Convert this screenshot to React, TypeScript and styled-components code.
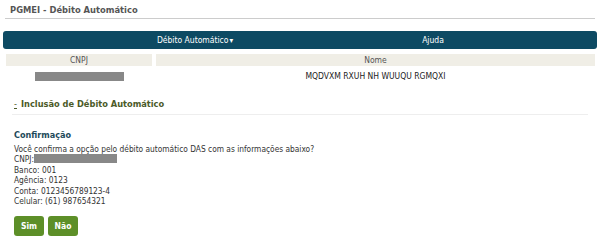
import React from "react";
import styled, { createGlobalStyle } from "styled-components";

const GlobalStyle = createGlobalStyle`
  body {
    margin: 0;
    background: #ffffff;
    font-family: "DejaVu Sans Condensed", "DejaVu Sans", Verdana, sans-serif;
    font-stretch: semi-condensed;
    font-size: 8.5px;
    color: #333;
  }
`;

export default function App(): JSX.Element {
  return (
    <>
      <GlobalStyle />
      <Page>
        <PageTitle>PGMEI - Débito Automático</PageTitle>
        <NavBar>
          <NavItem>
            Débito Automático<Caret>▾</Caret>
          </NavItem>
          <NavItem>Ajuda</NavItem>
        </NavBar>
        <InfoTable>
          <HeadCell>CNPJ</HeadCell>
          <HeadCell>Nome</HeadCell>
          <BodyCell>
            <Redacted $width={89} />
          </BodyCell>
          <BodyCell>MQDVXM RXUH NH WUUQU RGMQXI</BodyCell>
        </InfoTable>
        <SectionTitle>
          <Toggle>-</Toggle>
          Inclusão de Débito Automático
        </SectionTitle>
        <Content>
          <SubTitle>Confirmação</SubTitle>
          <Line>
            Você confirma a opção pelo débito automático DAS com as informações
            abaixo?
          </Line>
          <Line>
            CNPJ:
            <Redacted $width={83} />
          </Line>
          <Line>Banco: 001</Line>
          <Line>Agência: 0123</Line>
          <Line>Conta: 0123456789123-4</Line>
          <Line>Celular: (61) 987654321</Line>
          <Actions>
            <ActionButton>Sim</ActionButton>
            <ActionButton>Não</ActionButton>
          </Actions>
        </Content>
      </Page>
    </>
  );
}

const Page = styled.div`
  width: 600px;
  height: 240px;
  overflow: hidden;
`;

const PageTitle = styled.h1`
  margin: 0 5px;
  padding: 4px 5px 3px;
  font-size: 9.3px;
  font-weight: bold;
  color: #555;
  border-bottom: 1px solid #ccc;
  line-height: 11px;
`;

const NavBar = styled.nav`
  display: grid;
  grid-template-columns: 238px 238px;
  padding-left: 73px;
  margin: 12px 3px 0;
  height: 18px;
  background: #0d4a63;
  border-radius: 3px;
`;

const NavItem = styled.div`
  display: flex;
  align-items: center;
  justify-content: center;
  color: #fff;
  font-size: 8.5px;
`;

const Caret = styled.span`
  font-size: 8px;
  margin-left: 1px;
`;

const InfoTable = styled.div`
  display: grid;
  grid-template-columns: 146px 1fr;
  column-gap: 4px;
  row-gap: 4px;
  margin: 5px 5px 0 6px;
`;

const HeadCell = styled.div`
  background: #f0eee6;
  color: #555;
  text-align: center;
  height: 12px;
  line-height: 12px;
`;

const BodyCell = styled.div`
  height: 12px;
  color: #222;
  display: flex;
  align-items: center;
  justify-content: center;
`;

const Redacted = styled.span<{ $width: number }>`
  display: inline-block;
  width: ${(p) => p.$width}px;
  height: 9px;
  background: #888;
  vertical-align: top;
`;

const SectionTitle = styled.h2`
  margin: 16px 12px 0;
  padding: 0 0 4px 2px;
  font-size: 9.2px;
  font-weight: bold;
  color: #4b5a28;
  border-bottom: 1px solid #eee;
  line-height: 12px;
`;

const Toggle = styled.span`
  display: inline-block;
  margin-right: 4px;
  font-weight: normal;
  text-decoration: underline;
`;

const Content = styled.div`
  padding: 15px 14px 0;
`;

const SubTitle = styled.div`
  font-size: 9px;
  font-weight: bold;
  color: #1d4a5a;
  line-height: 11px;
  margin-bottom: 3px;
`;

const Line = styled.div`
  height: 10.4px;
  line-height: 10.4px;
  font-size: 8.3px;
  color: #333;
  white-space: nowrap;
`;

const Actions = styled.div`
  display: flex;
  gap: 4px;
  margin-top: 10px;
`;

const ActionButton = styled.button`
  width: 30px;
  height: 20px;
  padding: 0;
  border: none;
  border-radius: 3px;
  background: #5d8f28;
  color: #fff;
  font-family: "DejaVu Sans Condensed", "DejaVu Sans", Verdana, sans-serif;
  font-size: 8.5px;
  font-weight: bold;
  cursor: pointer;
`;
